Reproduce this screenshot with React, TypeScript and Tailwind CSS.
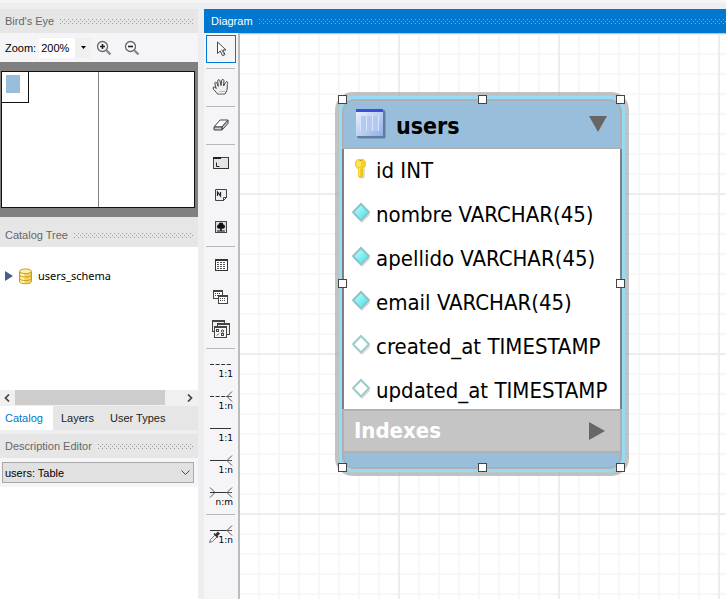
import { useId, type ReactNode } from "react";

function Dots({ color }: { color: string }) {
  const id = useId();
  return (
    <svg className="h-[5px] min-w-0 flex-1" aria-hidden="true">
      <defs>
        <pattern id={id} width="4" height="4" patternUnits="userSpaceOnUse">
          <rect x="0" y="0" width="1" height="1" fill={color} />
          <rect x="2" y="2" width="1" height="1" fill={color} />
        </pattern>
      </defs>
      <rect width="100%" height="5" fill={`url(#${id})`} />
    </svg>
  );
}

function PanelTitle({ children, className = "h-6" }: { children: ReactNode; className?: string }) {
  return (
    <header className={`flex items-center gap-1.5 bg-[#e6e6e6] px-[5px] text-[#666] ${className}`}>
      <h2 className="whitespace-nowrap">{children}</h2>
      <Dots color="#9a9a9a" />
    </header>
  );
}

function Magnifier({ plus }: { plus?: boolean }) {
  return (
    <svg width="16" height="16" viewBox="0 0 16 16" fill="none">
      <circle cx="6.5" cy="6.5" r="5" fill="#f8f8f8" stroke="#666" strokeWidth="1.3" />
      <path d="M10.5 10.5l4 4" stroke="#888" strokeWidth="2.4" />
      <path d={plus ? "M4 6.5h5M6.500 4v5" : "M4 6.500h5"} stroke="#222" strokeWidth="1.6" />
    </svg>
  );
}

function BirdsEye() {
  return (
    <section>
      <PanelTitle>Bird's Eye</PanelTitle>
      <div className="flex h-[29px] items-center bg-[#f5f5f8] pl-[5px]">
        <label htmlFor="zoom">Zoom:</label>
        <div className="relative ml-[3px] flex h-5 w-[52px] bg-white">
          <select id="zoom" defaultValue="200%" className="h-5 w-full appearance-none bg-transparent pl-0.5">
            <option>100%</option>
            <option>200%</option>
          </select>
          <span className="pointer-events-none absolute inset-y-0 right-0 flex w-4 items-center justify-center bg-[#f0f0f0]">
            <svg width="5" height="3" viewBox="0 0 5 3">
              <path d="M0 0h5L2.500 3z" fill="#000" />
            </svg>
          </span>
        </div>
        <button aria-label="Zoom in" className="ml-[5px]">
          <Magnifier plus />
        </button>
        <button aria-label="Zoom out" className="ml-3">
          <Magnifier />
        </button>
      </div>
      <div className="bg-[#808080] pt-[9px] pr-[3px] pb-[9px] pl-px">
        <div className="flex h-[137px] border border-[#111] bg-white">
          <div className="flex-1 border-r border-[#808080]">
            <div className="-mt-px -ml-px h-8 w-7 border border-[#111] pt-[3px] pl-1">
              <div className="h-[18px] w-3.5 bg-[#98bedb]" />
            </div>
          </div>
          <div className="flex-1" />
        </div>
      </div>
    </section>
  );
}

function Catalog() {
  const tab = "h-6 px-2 text-[#222]";
  return (
    <section>
      <PanelTitle className="h-[30px] pb-px pt-[7px]">Catalog Tree</PanelTitle>
      <div className="h-[143px] bg-white pt-5">
        <div className="flex h-[18px] items-center pl-[5px] font-['Noto_Sans',sans-serif] text-black">
          <svg width="8" height="10" viewBox="0 0 8 10">
            <path d="M0 0l8 5-8 5z" fill="#45608a" />
          </svg>
          <svg className="ml-[5px]" width="15" height="17" viewBox="0 0 15 17">
            <path d="M1.500 3.500v10c0 3 12 3 12 0v-10" fill="#f5d55e" stroke="#c79a1e" />
            <path d="M3.500 5v9.500M5.500 5.500v9.500" stroke="#fff3b8" strokeWidth="2" />
            <ellipse cx="7.500" cy="3.300" rx="6" ry="2.300" fill="#fdf0ab" stroke="#c79a1e" />
            <path d="M1.500 7c0 2.700 12 2.700 12 0M1.500 10.500c0 2.700 12 2.700 12 0" fill="none" stroke="#c79a1e" />
          </svg>
          <span className="ml-[5px]">users_schema</span>
        </div>
      </div>
      <div className="flex h-4 items-stretch bg-[#f0f0f0]">
        <button aria-label="Scroll left" className="flex w-[15px] items-center justify-center pr-0.5">
          <svg width="6" height="8" viewBox="0 0 6 8" fill="none" stroke="#444" strokeWidth="1.700">
            <path d="M5 .5L1.500 4 5 7.500" />
          </svg>
        </button>
        <div className="mb-px flex-1 pr-[18px]">
          <div className="h-full bg-[#cdcdcd]" />
        </div>
        <button aria-label="Scroll right" className="flex w-[15px] items-center justify-center pr-0.5">
          <svg width="6" height="8" viewBox="0 0 6 8" fill="none" stroke="#444" strokeWidth="1.700">
            <path d="M1 .5L4.500 4 1 7.500" />
          </svg>
        </button>
      </div>
      <div className="flex bg-[#e6e6e6]">
        <button className="h-6 bg-white pr-2.5 pl-[5px] text-[#0078d0]">Catalog</button>
        <button className={tab}>Layers</button>
        <button className={tab}>User Types</button>
      </div>
    </section>
  );
}

function DescriptionEditor() {
  return (
    <section className="mt-1">
      <PanelTitle>Description Editor</PanelTitle>
      <div className="bg-[#f5f5f8] px-0.5 pt-1 pb-1">
        <div className="relative mr-0.5">
          <select
            aria-label="Object"
            className="block h-[21px] w-full appearance-none border border-[#a8a8a8] bg-[#e1e1e1] pl-0.5 text-black"
          >
            <option>users: Table</option>
          </select>
          <svg
            className="pointer-events-none absolute top-2 right-1"
            width="9"
            height="6"
            viewBox="0 0 9 6"
            fill="none"
            stroke="#444"
          >
            <path d="M.5 .5l4 4 4-4" />
          </svg>
        </div>
      </div>
    </section>
  );
}

function Icon({ children }: { children: ReactNode }) {
  return (
    <svg width="18" height="18" viewBox="0 0 18 18" fill="none" stroke="#444" strokeWidth="1">
      {children}
    </svg>
  );
}

function Tool({ label, active, children }: { label: string; active?: boolean; children: ReactNode }) {
  return (
    <button
      aria-label={label}
      className={
        active
          ? "my-0.5 flex h-7 w-[30px] items-center justify-center border border-[#0078d7]"
          : "flex h-8 w-[30px] items-center justify-center"
      }
    >
      {children}
    </button>
  );
}

function Relation({
  text,
  dashed,
  left,
  right,
  pick,
}: {
  text: string;
  dashed?: boolean;
  left?: boolean;
  right?: boolean;
  pick?: boolean;
}) {
  return (
    <button className="relative flex h-8 w-[30px] items-end justify-end pr-[3px] pb-[3px]">
      <svg className="absolute inset-0" width="30" height="32" viewBox="0 0 30 32" fill="none" stroke="#333">
        <path d="M4 13.500h21" strokeDasharray={dashed ? "4 1.600" : undefined} />
        {right && <path d="M26 8.500l-5 5 5 5M20 13.500h6" stroke="#555" />}
        {left && <path d="M4 8.500l5 5-5 5" stroke="#555" />}
        {pick && (
          <g>
            <path d="M3.500 25.500l1-3 5-5 2 2-5 5z" fill="#eee" stroke="#777" />
            <path d="M8 16.500l4 4" stroke="#333" strokeWidth="1.500" />
            <path d="M10 18.500l3-3" stroke="#333" strokeWidth="3" />
          </g>
        )}
      </svg>
      <span className="font-['DejaVu_Sans',sans-serif] text-[9px] leading-3 text-black">{text}</span>
    </button>
  );
}

function Separator() {
  return (
    <div className="flex h-1.5 w-[29px] items-center">
      <div className="h-px w-full bg-[#b8b8b8]" />
    </div>
  );
}

function Toolbar() {
  return (
    <nav aria-label="Tools" className="w-9 shrink-0 border-r-2 border-[#bcbcbc] bg-[#f5f5f8] pl-0.5">
      <Tool label="Select" active>
        <Icon>
          <path d="M5.500 2v11.500l2.700-2.500 2.300 4.700 2.500-1.200-2.300-4.500h3.300z" fill="#fff" stroke="#444" />
          <path d="M9.500 9.500l2.500 5" stroke="#888" />
        </Icon>
      </Tool>
      <Separator />
      <Tool label="Pan">
        <Icon>
          <path
            d="M5.500 16c-1.500-2.500-4.500-4.500-4.500-6 0-1.500 2-1.200 3.200.5L2.900 6c-.5-2 1.500-2.500 2.100-.5L6.300 8.300 5.700 3.300c-.2-2 2-2.200 2.400-.2L9 7.500l.6-4.900c.3-1.800 2.500-1.500 2.300.5L11.600 8l1.900-3.600c.8-1.600 2.700-.8 2.100 1C14.700 9 16.500 10.500 13 16z"
            fill="#f0f0f0"
            stroke="#444"
          />
          <path d="M6 15.500h6.500M7 13.500h6" stroke="#bbb" />
        </Icon>
      </Tool>
      <Separator />
      <Tool label="Delete">
        <Icon>
          <path d="M2 11l6-7h8l-6 7z" fill="#fff" />
          <path d="M2 11v3h8v-3zM10 14l6-6.500V4l-6 7z" fill="#ccc" />
        </Icon>
      </Tool>
      <Separator />
      <Tool label="Layer">
        <Icon>
          <rect x="1.500" y="3.500" width="15" height="11" fill="#e4e4e4" stroke="#444" />
          <path d="M1 4h8" stroke="#222" strokeWidth="2" />
          <path d="M16.500 4v11M2 14.500h15" stroke="#333" />
          <path d="M4.500 8.500v4h3" stroke="#222" />
        </Icon>
      </Tool>
      <Tool label="Note">
        <Icon>
          <path d="M3.500 3.500h11v8l-3 3h-8z" fill="#eee" />
          <path d="M14.500 11.500h-3v3z" fill="#fff" />
          <path d="M5.500 10v-4l3 4v-4" stroke="#222" strokeWidth="1.200" />
        </Icon>
      </Tool>
      <Tool label="Image">
        <Icon>
          <rect x="3.500" y="3.500" width="11" height="11" fill="#ddd" />
          <path
            d="M9 4.500c2 0 2.500 1.500 2.200 2 1.500.3 1.800 1.500 1.800 2 0 2-2 2.500-3.200 2v2h3v1H5v-1h3.200v-2C7 11 5 10.500 5 8.500c0-.7.500-1.800 1.800-2C6.500 5.500 7.500 4.500 9 4.500z"
            fill="#111"
            stroke="none"
          />
        </Icon>
      </Tool>
      <Separator />
      <Tool label="Table">
        <Icon>
          <rect x="3.500" y="3.500" width="12" height="11" fill="#fff" stroke="#333" />
          <path d="M3 4h13" stroke="#333" strokeWidth="2" />
          <path d="M5 6.500h9M5 8.500h9M5 10.500h9M5 12.500h9" stroke="#555" strokeDasharray="2 1" />
        </Icon>
      </Tool>
      <Tool label="View">
        <Icon>
          <rect x="1.500" y="2.500" width="9" height="8" fill="#fff" />
          <path d="M1 3h10" strokeWidth="2" />
          <path d="M3 5.500h6M3 7.500h6" strokeDasharray="1 1" />
          <rect x="6.500" y="7.500" width="9" height="8" fill="#fff" />
          <path d="M6 8h10" strokeWidth="2" />
          <path d="M8 10.500h6M8 12.500h6" strokeDasharray="1 1" />
        </Icon>
      </Tool>
      <Tool label="Routine group">
        <Icon>
          <rect x=".5" y=".5" width="12" height="11" fill="#eee" />
          <path d="M0 1h13" strokeWidth="2" />
          <rect x="5.500" y="3.500" width="12" height="11" fill="#eee" />
          <path d="M5 4h13" strokeWidth="2" />
          <rect x="2.500" y="6.500" width="12" height="11" fill="#f8f8f8" />
          <path d="M2 7h13" strokeWidth="2" />
          <rect x="4.500" y="9.500" width="2" height="2" />
          <circle cx="10.500" cy="11" r="1.200" />
          <rect x="9.500" y="13.500" width="2" height="2" />
          <path d="M5 15.500l2-2" />
        </Icon>
      </Tool>
      <Separator />
      <Relation text="1:1" dashed />
      <Relation text="1:n" dashed right />
      <Relation text="1:1" />
      <Relation text="1:n" right />
      <Relation text="n:m" left right />
      <Separator />
      <Relation text="1:n" right pick />
    </nav>
  );
}

function KeyIcon() {
  return (
    <svg width="18" height="22" viewBox="0 0 18 22">
      <path d="M8 11h5v8l-2.500 2L8 19z" fill="#999" opacity=".35" />
      <path d="M6 9h5v8.500L9.500 20h-2L6 18z" fill="#f2c41a" />
      <path d="M5.500 1h6L14 4v4l-2.500 3h-6L3 8V4z" fill="#f8cf1e" />
      <path d="M6 2.500h3v6H4.500V4z" fill="#fce46a" />
      <path d="M7.500 10v8" stroke="#fbe57a" strokeWidth="1.500" />
      <path d="M7.500 2.500h2" stroke="#b8920f" />
    </svg>
  );
}

function Diamond({ filled }: { filled: boolean }) {
  return (
    <svg width="18" height="22" viewBox="0 0 18 22">
      <defs>
        <linearGradient id="aqua" x1="0" y1="0" x2="1" y2="1">
          <stop offset="0" stopColor="#d8ffff" />
          <stop offset="1" stopColor="#2fe0e6" />
        </linearGradient>
      </defs>
      <path d="M10 4l8.500 8.500L10 21l-8.500-8.500z" fill="#888" opacity=".3" />
      <path
        d="M9 2l8 8.200-8 8.200-8-8.200z"
        fill={filled ? "url(#aqua)" : "#fff"}
        stroke={filled ? "#8cc4c6" : "#9accca"}
        strokeWidth="2"
      />
    </svg>
  );
}

const columns = [
  { text: "id INT", kind: "key" },
  { text: "nombre VARCHAR(45)", kind: "required" },
  { text: "apellido VARCHAR(45)", kind: "required" },
  { text: "email VARCHAR(45)", kind: "required" },
  { text: "created_at TIMESTAMP", kind: "nullable" },
  { text: "updated_at TIMESTAMP", kind: "nullable" },
];

const handles = [
  "left-[3px] top-[3px]",
  "left-[143px] top-[3px]",
  "right-[4px] top-[3px]",
  "left-[3px] top-[187px]",
  "right-[4px] top-[187px]",
  "left-[3px] bottom-[4px]",
  "left-[143px] bottom-[4px]",
  "right-[4px] bottom-[4px]",
];

function TableFigure() {
  return (
    <article className="absolute top-[58px] left-[95px] w-[294px] rounded-[18px] bg-[#979d9f]/60 p-1">
      <div className="rounded-[15px] bg-[#95daf6] p-[3px]">
        <div className="overflow-hidden rounded-[13px] bg-[#98bedb]">
          <header className="flex h-[50px] items-center rounded-t-[13px] border-2 border-[#b0b0b0] pr-[13px] pl-3">
            <svg width="30" height="32" viewBox="0 0 30 32">
              <defs>
                <linearGradient id="sheet" x1="0" y1="0" x2="1" y2="1">
                  <stop offset="0" stopColor="#eef4ff" />
                  <stop offset="1" stopColor="#8fb0e6" />
                </linearGradient>
              </defs>
              <rect x="2" y="3" width="28" height="28" rx="2" fill="#44688c" opacity=".35" />
              <rect x="1" y="2" width="28" height="28" rx="1" fill="#44688c" opacity=".6" />
              <rect x="0" y="1" width="27" height="27" fill="url(#sheet)" />
              <path d="M0 1h27v3H0z" fill="#3c4fd8" />
              <path d="M5 8h5v15H5zM11 8h5v15h-5zM17 8h5v15h-5z" fill="#b4c9f0" />
              <path d="M4.500 7v16M10.500 7v16M16.500 7v16M22.500 7v16" stroke="#d9e5fb" />
            </svg>
            <h1 className="mt-1 ml-[10px] flex-1 text-[23px] leading-8 font-bold text-black">users</h1>
            <button aria-label="Collapse">
              <svg width="18" height="16" viewBox="0 0 18 16">
                <path d="M0 0h18L9 16z" fill="#666" />
              </svg>
            </button>
          </header>
          <ul className="flex flex-col gap-3 border-x-2 border-[#808080] bg-white py-1">
            {columns.map((c) => (
              <li key={c.text} className="flex h-8 items-center gap-1.5 pl-2">
                {c.kind === "key" ? <KeyIcon /> : <Diamond filled={c.kind === "required"} />}
                <span className="mt-1 whitespace-nowrap text-[22px] leading-8 text-black">{c.text}</span>
              </li>
            ))}
          </ul>
          <div className="flex h-11 items-center justify-between border-2 border-[#b0b0b0] bg-[#c5c5c5] pr-[15px] pl-2.5 font-bold text-white">
            <span className="text-[22px] leading-8">Indexes</span>
            <button aria-label="Expand indexes">
              <svg width="16" height="18" viewBox="0 0 16 18">
                <path d="M0 0v18l16-9z" fill="#666" />
              </svg>
            </button>
          </div>
          <div className="h-4 rounded-b-[13px] border-x-2 border-b-2 border-[#b0b0b0]" />
        </div>
      </div>
      {handles.map((h) => (
        <span key={h} className={`absolute size-[9px] border border-[#444] bg-white ${h}`} />
      ))}
    </article>
  );
}

function Grid() {
  return (
    <svg className="absolute inset-0 size-full" aria-hidden="true">
      <defs>
        <pattern id="minor" x="-2" y="-1" width="20" height="20" patternUnits="userSpaceOnUse">
          <path d="M0 1h20M1 0v20" stroke="#f7f7f7" strokeWidth="2" />
        </pattern>
        <pattern id="major" x="-2" y="-1" width="160" height="160" patternUnits="userSpaceOnUse">
          <path d="M0 1h160M1 0v160" stroke="#ededed" strokeWidth="2" />
        </pattern>
      </defs>
      <rect width="100%" height="100%" fill="url(#minor)" />
      <rect width="100%" height="100%" fill="url(#major)" />
    </svg>
  );
}

export default function App() {
  return (
    <div className="flex min-h-screen flex-col bg-[#eeeef1] font-['Liberation_Sans',Arial,sans-serif] text-[11px] leading-4 text-black">
      <div className="h-[9px] shrink-0 border-t-[3px] border-[#f5f5f8]" />
      <div className="flex flex-1 gap-1.5">
        <aside className="flex w-[198px] shrink-0 flex-col">
          <BirdsEye />
          <Catalog />
          <DescriptionEditor />
          <div className="flex-1 bg-white" />
        </aside>
        <main className="flex min-w-0 flex-1 flex-col">
          <header className="flex h-6 items-center gap-1.5 bg-[#0078d0] pl-[7px] text-white">
            <h2>Diagram</h2>
            <Dots color="#6cb4ea" />
          </header>
          <div className="flex flex-1">
            <Toolbar />
            <div className="relative min-w-0 flex-1 overflow-hidden border-t border-[#c4c4c4] bg-white font-['DejaVu_Sans_Condensed','Noto_Sans',sans-serif]">
              <Grid />
              <TableFigure />
            </div>
          </div>
        </main>
      </div>
    </div>
  );
}
